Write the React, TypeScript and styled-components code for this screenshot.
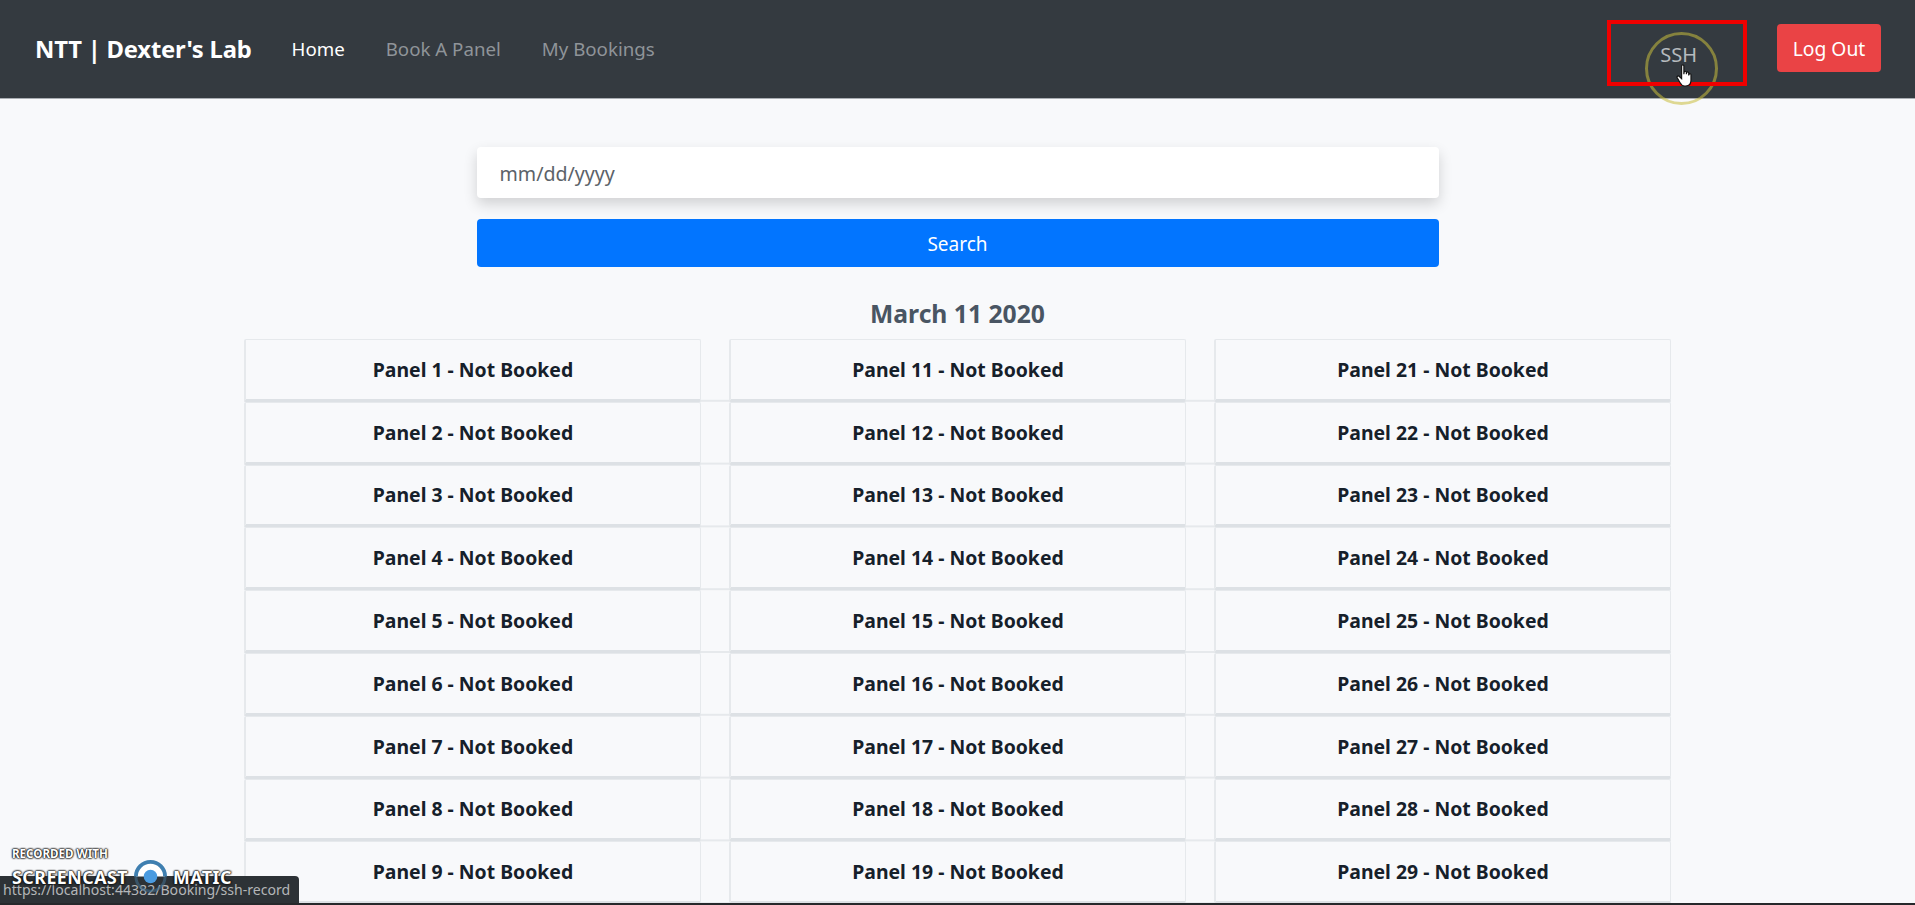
import React from 'react';
import styled, {createGlobalStyle} from 'styled-components';

const FONT = `"Noto Sans", "Open Sans", "Liberation Sans", sans-serif`;

const GlobalStyle = createGlobalStyle`
  html, body {
    margin: 0;
    padding: 0;
    height: 905px;
    overflow: hidden;
    background: #f8f9fb;
    font-family: ${FONT};
  }
`;

const columns = [0, 10, 20];
const rows = [1, 2, 3, 4, 5, 6, 7, 8, 9];

const App: React.FC = () => (
    <Page>
        <GlobalStyle/>
        <Navbar>
            <Brand>NTT | Dexter's Lab</Brand>
            <NavLinks>
                <NavLink $active>Home</NavLink>
                <NavLink>Book A Panel</NavLink>
                <NavLink>My Bookings</NavLink>
            </NavLinks>
            <NavRight>
                <SshLink>
                    SSH
                    <ClickRing/>
                    <RedBox/>
                    <HandCursor viewBox="0 0 16 22">
                        <path
                            d="M5 1.5c0-1 2-1 2 0V9l.3-2c.2-1 1.8-.9 1.9.1V9l.3-1.400c.2-1 1.800-.8 1.800.2V10l.4-1c.3-.8 1.600-.6 1.600.4v5c0 3-1.600 5-4.500 5H7.500c-2 0-3-1-4-3L1 12c-.5-1 .8-2 1.700-1.200L5 13V1.500z"
                            fill="#fff"
                            stroke="#111"
                            strokeWidth="1"/>
                    </HandCursor>
                </SshLink>
                <LogoutButton>Log Out</LogoutButton>
            </NavRight>
        </Navbar>

        <SearchForm>
            <DateInput>mm/dd/yyyy</DateInput>
            <SearchButton>Search</SearchButton>
        </SearchForm>

        <DateHeading>March 11 2020</DateHeading>

        <PanelGrid>
            {
                rows.map((row) => columns.map((offset) => (
                    <PanelCard key={row + offset}>
                        Panel {row + offset} - Not Booked
                    </PanelCard>
                )))
            }
        </PanelGrid>

        <StatusBar>https://localhost:44382/Booking/ssh-record</StatusBar>
        <Watermark>
            <RecordedWith>RECORDED WITH</RecordedWith>
            <WatermarkRow>
                <WatermarkWord>SCREENCAST</WatermarkWord>
                <LogoMark viewBox="0 0 36 36">
                    <path d="M3 18a15 15 0 0 1 30 0z" fill="#fff"/>
                    <path d="M3 18a15 15 0 0 1 30 0" fill="none" stroke="#3f7fb0" strokeWidth="4"/>
                    <path d="M3 18a15 15 0 0 0 30 0" fill="none" stroke="#3f6a8a" strokeWidth="3" opacity="0.6"/>
                    <circle cx="18" cy="18" r="7" fill="#4a9be0"/>
                </LogoMark>
                <WatermarkWord>MATIC</WatermarkWord>
            </WatermarkRow>
        </Watermark>
        <BottomEdge/>
    </Page>
);

export default App;

// styled-components

const Page = styled.div `
  position: relative;
  width: 1915px;
  height: 905px;
  overflow: hidden;
  background: #f8f9fb;
`;

const Navbar = styled.nav `
  display: flex;
  align-items: center;
  height: 98px;
  padding: 0 34px 0 35px;
  background: #343a40;
  border-bottom: 1px solid #a9adb3;
`;

const Brand = styled.span `
  font-size: 23.8px;
  font-weight: 700;
  color: #fff;
  letter-spacing: -0.2px;
  margin-right: 40px;
`;

const NavLinks = styled.div `
  display: flex;
  gap: 41px;
  padding-bottom: 2px;
`;

const NavLink = styled.span < {
    $active?: boolean
} > `
  font-size: 18.7px;
  color: ${ (props) => (
    props.$active
        ? '#fff'
        : '#8f9499'
)};
`;

const NavRight = styled.div `
  display: flex;
  align-items: center;
  margin-left: auto;
`;

const SshLink = styled.span `
  position: relative;
  top: 5px;
  margin-right: 80px;
  font-size: 20px;
  color: #b6babe;
`;

const ClickRing = styled.span `
  position: absolute;
  left: -15px;
  top: -9px;
  width: 67px;
  height: 67px;
  border: 3px solid rgba(200, 190, 60, 0.55);
  border-radius: 50%;
`;

const RedBox = styled.span `
  position: absolute;
  left: -53px;
  top: -21px;
  width: 132px;
  height: 58px;
  border: 4px solid #f00000;
`;

const HandCursor = styled.svg `
  position: absolute;
  left: 16px;
  top: 23px;
  width: 18px;
  height: 25px;
`;

const LogoutButton = styled.button `
  width: 104px;
  height: 48px;
  margin-bottom: 2px;
  padding: 0;
  font-family: ${FONT};
  font-size: 19.3px;
  color: #fff;
  background: #ea4345;
  border: none;
  border-radius: 4px;
`;

const SearchForm = styled.div `
  display: flex;
  flex-direction: column;
  gap: 21px;
  width: 962px;
  margin: 48px auto 0;
`;

const DateInput = styled.div `
  display: flex;
  align-items: center;
  box-sizing: border-box;
  height: 51px;
  padding: 2px 0 0 23px;
  font-size: 19.6px;
  color: #5b6269;
  background: #fff;
  border-radius: 4px;
  box-shadow: 0 6px 14px rgba(0, 0, 0, 0.16);
`;

const SearchButton = styled.button `
  height: 48px;
  padding: 2px 0 0;
  font-family: ${FONT};
  font-size: 19px;
  color: #fff;
  background: #0275ff;
  border: none;
  border-radius: 4px;
`;

const DateHeading = styled.h2 `
  margin: 29px 0 0;
  height: 43px;
  line-height: 36px;
  text-align: center;
  font-size: 24.7px;
  font-weight: 700;
  color: #495563;
`;

const PanelGrid = styled.div `
  display: grid;
  grid-template-columns: repeat(3, 457.5px);
  grid-auto-rows: 62.8px;
  column-gap: 27.5px;
  width: 1427.5px;
  margin: 0 auto;
  background: linear-gradient(to top, #e6e9ec 2px, transparent 2px) 0 0 / 100% 62.8px;
`;

const PanelCard = styled.div `
  display: flex;
  align-items: center;
  justify-content: center;
  box-sizing: border-box;
  font-size: 19.4px;
  font-weight: 700;
  color: #16202a;
  border: 1px solid #e6e9ec;
  border-left-width: 2px;
  border-bottom: 3px solid #dde1e5;
  border-radius: 2px;
`;

const Watermark = styled.div `
  position: absolute;
  left: 12px;
  bottom: 11px;
  color: #fff;
  font-weight: 700;
  text-shadow: 0 0 2px #111, 0 0 2px #111, 0 0 2px #111, 0 0 1px #111;
`;

const RecordedWith = styled.div `
  font-size: 11.6px;
  line-height: 13px;
`;

const WatermarkRow = styled.div `
  display: flex;
  align-items: center;
  margin-top: -1px;
`;

const WatermarkWord = styled.span `
  font-size: 17.8px;
  letter-spacing: 0.5px;
`;

const LogoMark = styled.svg `
  width: 35px;
  height: 35px;
  margin: 0 5px 0 5px;
`;

const StatusBar = styled.div `
  position: absolute;
  left: 0;
  bottom: 2px;
  width: 299px;
  height: 27px;
  padding-left: 3px;
  box-sizing: border-box;
  font-size: 14.1px;
  line-height: 27px;
  white-space: nowrap;
  color: #b4b6b8;
  background: #2d3236;
  border-top-right-radius: 4px;
`;

const BottomEdge = styled.div `
  position: absolute;
  left: 0;
  right: 0;
  bottom: 0;
  height: 2px;
  background: #26282b;
`;
